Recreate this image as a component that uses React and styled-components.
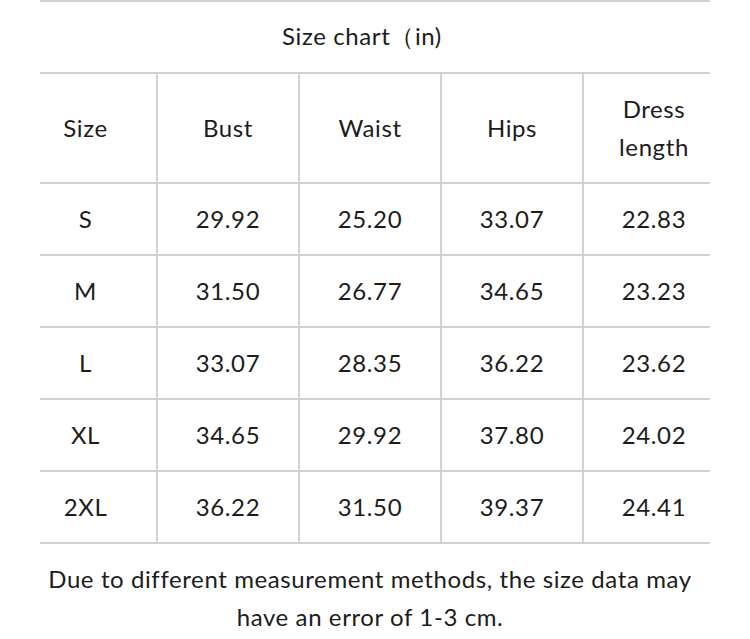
import React from 'react'
import styled, { createGlobalStyle } from 'styled-components'

const GlobalStyle = createGlobalStyle`
  body {
    margin: 0;
    background: #fff;
    font-family: 'Lato', 'Liberation Sans', sans-serif;
    letter-spacing: 0.6px;
    color: #1c1c1c;
  }
`

const Page = styled.div`
  padding: 0 40px;
`

const Chart = styled.table`
  width: 670px;
  border-collapse: collapse;
  table-layout: fixed;
  font-size: 24px;
  text-align: center;
`

const Title = styled.th`
  height: 70px;
  padding: 0 26px 0 0;
  font-weight: 400;
  border-top: 2px solid #d2d2d2;
  border-bottom: 2px solid #d2d2d2;
`

const Cell = styled.td`
  height: ${props => (props.head ? 108 : 70)}px;
  padding: 0;
  line-height: 38px;
  border: 2px solid #d2d2d2;

  &:first-child {
    border-left: 0;
    padding-right: 25px;
  }

  &:last-child {
    border-right: 0;
    padding-left: 14px;
  }
`

const Note = styled.p`
  margin: 16px 0 0;
  width: 660px;
  padding-right: 10px;
  text-align: center;
  font-size: 24px;
  line-height: 38px;
`

const rows = [
  ['S', '29.92', '25.20', '33.07', '22.83'],
  ['M', '31.50', '26.77', '34.65', '23.23'],
  ['L', '33.07', '28.35', '36.22', '23.62'],
  ['XL', '34.65', '29.92', '37.80', '24.02'],
  ['2XL', '36.22', '31.50', '39.37', '24.41'],
]

export default function App() {
  return (
    <Page>
      <GlobalStyle />
      <Chart>
        <colgroup>
          <col style={{ width: 117 }} />
          <col style={{ width: 142 }} />
          <col style={{ width: 142 }} />
          <col style={{ width: 142 }} />
          <col style={{ width: 127 }} />
        </colgroup>
        <thead>
          <tr>
            <Title colSpan={5}>Size chart（in)</Title>
          </tr>
        </thead>
        <tbody>
          <tr>
            <Cell head>Size</Cell>
            <Cell head>Bust</Cell>
            <Cell head>Waist</Cell>
            <Cell head>Hips</Cell>
            <Cell head>
              Dress
              <br />
              length
            </Cell>
          </tr>
          {rows.map(row => (
            <tr key={row[0]}>
              {row.map((value, i) => (
                <Cell key={i}>{value}</Cell>
              ))}
            </tr>
          ))}
        </tbody>
      </Chart>
      <Note>
        Due to different measurement methods, the size data may have an error
        of 1-3 cm.
      </Note>
    </Page>
  )
}
